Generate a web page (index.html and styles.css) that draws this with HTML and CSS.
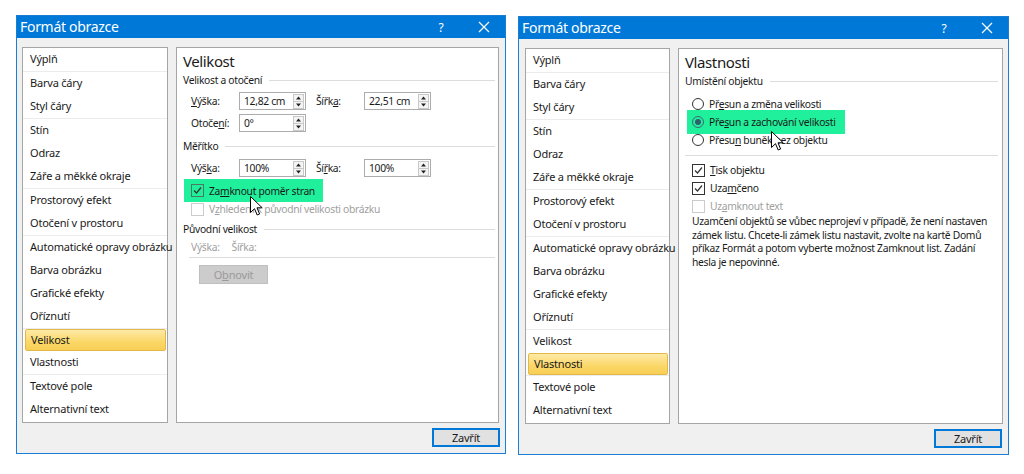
FILE: index.html
```html
<!DOCTYPE html>
<html lang="cs">
<head>
<meta charset="utf-8">
<title>Formát obrazce</title>
<link rel="stylesheet" href="styles.css">
</head>
<body>
<div class="screen">

  <!-- LEFT DIALOG -->
  <div class="dialog dialog-left">
    <div class="titlebar">
      <span class="title">Formát obrazce</span>
      <span class="tb-help">?</span>
      <svg class="tb-close" width="12" height="12" viewBox="0 0 12 12"><path d="M1 1L11 11M11 1L1 11" stroke="#fff" stroke-width="1.2"/></svg>
    </div>
    <div class="dbody">
      <div class="main">
        <ul class="nav">
          <li class="grp"><span class="item">Výplň</span></li>
          <li class="grp"><span class="item">Barva čáry</span><span class="item">Styl čáry</span></li>
          <li class="grp"><span class="item">Stín</span><span class="item">Odraz</span><span class="item">Záře a měkké okraje</span></li>
          <li class="grp"><span class="item">Prostorový efekt</span><span class="item">Otočení v prostoru</span></li>
          <li class="grp"><span class="item">Automatické opravy obrázku</span><span class="item">Barva obrázku</span><span class="item">Grafické efekty</span><span class="item">Oříznutí</span></li>
          <li class="grp"><span class="item sel">Velikost</span><span class="item">Vlastnosti</span></li>
          <li class="grp"><span class="item">Textové pole</span><span class="item">Alternativní text</span></li>
        </ul>
        <div class="panel">
          <h2 class="ph">Velikost</h2>
          <div class="sec">Velikost a otočení</div>
          <div class="frow r1">
            <span class="lbl"><u>V</u>ýška:</span>
            <span class="spin"><span class="val">12,82 cm</span><svg class="sb" width="11" height="15" viewBox="0 0 11 15"><rect x="0.5" y="0.5" width="10" height="14" fill="#f4f4f4" stroke="#c8c8c8"/><line x1="1" y1="7.5" x2="10" y2="7.5" stroke="#c8c8c8"/><path d="M3 5.5h5L5.5 2.5z" fill="#222"/><path d="M3 9.5h5L5.5 12.5z" fill="#222"/></svg></span>
            <span class="lbl lbl2">Šířk<u>a</u>:</span>
            <span class="spin"><span class="val">22,51 cm</span><svg class="sb" width="11" height="15" viewBox="0 0 11 15"><rect x="0.5" y="0.5" width="10" height="14" fill="#f4f4f4" stroke="#c8c8c8"/><line x1="1" y1="7.5" x2="10" y2="7.5" stroke="#c8c8c8"/><path d="M3 5.5h5L5.5 2.5z" fill="#222"/><path d="M3 9.5h5L5.5 12.5z" fill="#222"/></svg></span>
          </div>
          <div class="frow r2">
            <span class="lbl">Otoče<u>n</u>í:</span>
            <span class="spin"><span class="val">0°</span><svg class="sb" width="11" height="15" viewBox="0 0 11 15"><rect x="0.5" y="0.5" width="10" height="14" fill="#f4f4f4" stroke="#c8c8c8"/><line x1="1" y1="7.5" x2="10" y2="7.5" stroke="#c8c8c8"/><path d="M3 5.5h5L5.5 2.5z" fill="#222"/><path d="M3 9.5h5L5.5 12.5z" fill="#222"/></svg></span>
          </div>
          <div class="sec sec-m">Měřítko</div>
          <div class="frow r3">
            <span class="lbl">Výš<u>k</u>a:</span>
            <span class="spin"><span class="val">100%</span><svg class="sb" width="11" height="15" viewBox="0 0 11 15"><rect x="0.5" y="0.5" width="10" height="14" fill="#f4f4f4" stroke="#c8c8c8"/><line x1="1" y1="7.5" x2="10" y2="7.5" stroke="#c8c8c8"/><path d="M3 5.5h5L5.5 2.5z" fill="#222"/><path d="M3 9.5h5L5.5 12.5z" fill="#222"/></svg></span>
            <span class="lbl lbl2">Ší<u>ř</u>ka:</span>
            <span class="spin"><span class="val">100%</span><svg class="sb" width="11" height="15" viewBox="0 0 11 15"><rect x="0.5" y="0.5" width="10" height="14" fill="#f4f4f4" stroke="#c8c8c8"/><line x1="1" y1="7.5" x2="10" y2="7.5" stroke="#c8c8c8"/><path d="M3 5.5h5L5.5 2.5z" fill="#222"/><path d="M3 9.5h5L5.5 12.5z" fill="#222"/></svg></span>
          </div>
          <div class="chk hl hl-left">
            <span class="box checked"><svg width="11" height="11" viewBox="0 0 11 11"><path d="M2 5.5L4.5 8L9 2.5" fill="none" stroke="#333" stroke-width="1.2"/></svg></span>
            <span>Za<u>m</u>knout poměr stran</span>
          </div>
          <div class="chk dis chk-orig">
            <span class="box"></span>
            <span>V<u>z</u>hledem k původní velikosti obrázku</span>
          </div>
          <div class="sec sec-p">Původní velikost</div>
          <div class="orig dis"><span>Výška:</span><span>Šířka:</span></div>
          <div class="hline"></div>
          <div class="btn-dis">O<u>b</u>novit</div>
          <svg class="cursor cur-left" width="13" height="20" viewBox="0 0 13 20"><path d="M0.5 0.5V16.5L4.5 12.7L7.2 19L9.6 18L7 11.8H12.2Z" fill="#fff" stroke="#000" stroke-width="1"/></svg>
        </div>
      </div>
      <div class="foot"><span class="btn">Zavřít</span></div>
    </div>
  </div>

  <!-- RIGHT DIALOG -->
  <div class="dialog dialog-right">
    <div class="titlebar">
      <span class="title">Formát obrazce</span>
      <span class="tb-help">?</span>
      <svg class="tb-close" width="12" height="12" viewBox="0 0 12 12"><path d="M1 1L11 11M11 1L1 11" stroke="#fff" stroke-width="1.2"/></svg>
    </div>
    <div class="dbody">
      <div class="main">
        <ul class="nav">
          <li class="grp"><span class="item">Výplň</span></li>
          <li class="grp"><span class="item">Barva čáry</span><span class="item">Styl čáry</span></li>
          <li class="grp"><span class="item">Stín</span><span class="item">Odraz</span><span class="item">Záře a měkké okraje</span></li>
          <li class="grp"><span class="item">Prostorový efekt</span><span class="item">Otočení v prostoru</span></li>
          <li class="grp"><span class="item">Automatické opravy obrázku</span><span class="item">Barva obrázku</span><span class="item">Grafické efekty</span><span class="item">Oříznutí</span></li>
          <li class="grp"><span class="item">Velikost</span><span class="item sel">Vlastnosti</span></li>
          <li class="grp"><span class="item">Textové pole</span><span class="item">Alternativní text</span></li>
        </ul>
        <div class="panel">
          <h2 class="ph">Vlastnosti</h2>
          <div class="sec">Umístění objektu</div>
          <div class="radios">
            <div class="rad"><span class="rb"></span><span>Př<u>e</u>sun a změna velikosti</span></div>
            <div class="rad hl hl-right"><span class="rb on"></span><span>Pře<u>s</u>un a zachování velikosti</span></div>
            <div class="rad"><span class="rb"></span><span>Přesu<u>n</u> buněk bez objektu</span></div>
          </div>
          <div class="hline hline-full"></div>
          <div class="checks">
            <div class="chk"><span class="box checked"><svg width="11" height="11" viewBox="0 0 11 11"><path d="M2 5.5L4.5 8L9 2.5" fill="none" stroke="#333" stroke-width="1.2"/></svg></span><span><u>T</u>isk objektu</span></div>
            <div class="chk"><span class="box checked"><svg width="11" height="11" viewBox="0 0 11 11"><path d="M2 5.5L4.5 8L9 2.5" fill="none" stroke="#333" stroke-width="1.2"/></svg></span><span>Uza<u>m</u>čeno</span></div>
            <div class="chk dis"><span class="box"></span><span>Uz<u>a</u>mknout text</span></div>
          </div>
          <p class="note">Uzamčení objektů se vůbec neprojeví v případě, že není nastaven<br>zámek listu. Chcete-li zámek listu nastavit, zvolte na kartě Domů<br>příkaz Formát a potom vyberte možnost Zamknout list. Zadání<br>hesla je nepovinné.</p>
          <svg class="cursor cur-right" width="13" height="20" viewBox="0 0 13 20"><path d="M0.5 0.5V16.5L4.5 12.7L7.2 19L9.6 18L7 11.8H12.2Z" fill="#fff" stroke="#000" stroke-width="1"/></svg>
        </div>
      </div>
      <div class="foot"><span class="btn">Zavřít</span></div>
    </div>
  </div>

</div>
</body>
</html>
```

FILE: styles.css
```css
* { box-sizing: border-box; }

html, body {
  margin: 0;
  padding: 0;
  background: #fff;
}

body {
  font-family: "Noto Sans", "Open Sans", "DejaVu Sans", sans-serif;
  font-size: 11px;
  letter-spacing: -0.2px;
  color: #1a1a1a;
  width: 1024px;
  height: 474px;
  overflow: hidden;
}

u { text-decoration: underline; text-underline-offset: 1px; }

.screen {
  display: flex;
  align-items: flex-start;
  gap: 12px;
  padding: 15px 0 0 16px;
}

.dialog {
  border: 1px solid #1a7fd4;
  background: #f0f0f0;
  display: flex;
  flex-direction: column;
}

.dialog-left { width: 490px; height: 439px; }
.dialog-right { width: 491px; height: 439px; margin-top: 1px; }

.titlebar {
  height: 22px;
  background: #0078d7;
  color: #fff;
  display: flex;
  align-items: center;
  padding-left: 3px;
  flex-shrink: 0;
}

.title {
  font-size: 14px;
  letter-spacing: -0.3px;
  flex: 1;
  line-height: 22px;
}

.tb-help {
  font-size: 12px;
  width: 12px;
  text-align: center;
  margin-right: 31px;
}

.tb-close { margin-right: 15px; }

.dbody {
  flex: 1;
  display: flex;
  flex-direction: column;
  padding: 9px 6px 0 5px;
}

.dialog-right .dbody { padding: 9px 5px 0 6px; }

.main {
  display: flex;
  gap: 8px;
  height: 376px;
}

.nav {
  list-style: none;
  margin: 0;
  padding: 0;
  width: 146px;
  flex-shrink: 0;
  background: #fff;
  border: 1px solid #a5a5a5;
}

.dialog-right .nav { width: 145px; }

.grp + .grp { border-top: 1px solid #ececec; }

.item {
  display: block;
  height: 23px;
  line-height: 21px;
  padding: 0 0 2px 7px;
  white-space: nowrap;
}

.item.sel {
  margin: 0 1px 0 2px;
  padding-left: 5px;
  border: 1px solid #e3b84a;
  border-radius: 2px;
  background: linear-gradient(#fdeaa6, #fbd768 60%, #f8cf55);
  line-height: 19px;
  height: 22px;
}

.panel {
  flex: 1;
  background: #fff;
  border: 1px solid #a5a5a5;
  padding: 2px 3px 0 6px;
  position: relative;
  font-size: 10.3px;
  letter-spacing: -0.3px;
}

.dialog-right .panel { padding-right: 4px; }

.ph {
  margin: 0;
  font-size: 15px;
  letter-spacing: -0.4px;
  font-weight: normal;
  line-height: 22px;
  height: 22px;
  color: #1a1a1a;
}

.sec {
  display: flex;
  align-items: center;
  gap: 7px;
  height: 16px;
  white-space: nowrap;
}

.sec::after {
  content: "";
  flex: 1;
  border-top: 1px solid #dcdcdc;
}

.frow {
  display: flex;
  align-items: center;
  height: 18px;
  padding-left: 8px;
}

.r1 { margin-top: 4px; }
.r2 { margin-top: 4px; }
.sec-m { margin-top: 6px; }
.r3 { margin-top: 5px; }

.lbl { width: 48px; flex-shrink: 0; white-space: nowrap; }
.lbl2 { margin-left: 10px; }

.spin {
  width: 67px;
  height: 18px;
  border: 1px solid #acacac;
  display: flex;
  align-items: center;
  justify-content: space-between;
  padding: 0 1px 0 4px;
  background: #fff;
}

.val { white-space: nowrap; }
.sb { display: block; }

.chk {
  display: flex;
  align-items: center;
  gap: 5px;
  height: 17px;
  padding-left: 8px;
  white-space: nowrap;
}

.box {
  width: 13px;
  height: 13px;
  border: 1px solid #333;
  background: #fff;
  display: flex;
  align-items: center;
  justify-content: center;
  flex-shrink: 0;
}

.dis { color: #a0a0a0; }
.dis .box { border-color: #cccccc; }

.hl {
  background: #20f09b;
}

.hl .box { background: transparent; border-color: #4a7a62; }

.hl-left {
  margin: 2px 0 -3px 1px;
  padding: 3px 13px 3px 7px;
  height: 23px;
  width: 139px;
}

.chk-orig { margin-top: 2px; height: 16px; }

.sec-p { margin-top: 4px; }

.orig {
  display: flex;
  gap: 12px;
  padding-left: 8px;
  height: 16px;
  align-items: center;
  margin-top: 2px;
}

.hline {
  border-top: 1px solid #dcdcdc;
  margin: 2px 0 0 6px;
}

.btn-dis {
  margin: 7px 0 0 16px;
  width: 69px;
  height: 19px;
  background: #cccccc;
  color: #9a9a9a;
  text-align: center;
  line-height: 18px;
  border: 1px solid #bfbfbf;
  font-size: 11px;
  letter-spacing: -0.2px;
}

.foot {
  display: flex;
  justify-content: flex-end;
  padding-top: 5px;
}

.btn {
  width: 68px;
  height: 19px;
  border: 2px solid #0078d7;
  background: #e1e1e1;
  text-align: center;
  line-height: 15px;
  color: #1a1a1a;
}

.dialog-left .btn { margin-right: -1px; }
.dialog-right .btn { margin-right: 1px; }

.radios { margin-top: 6px; }

.rad {
  display: flex;
  align-items: center;
  gap: 5px;
  height: 18px;
  padding-left: 7px;
  white-space: nowrap;
}

.rb {
  width: 12px;
  height: 12px;
  border: 1px solid #333;
  border-radius: 50%;
  background: #fff;
  flex-shrink: 0;
  display: flex;
  align-items: center;
  justify-content: center;
}

.rb.on { border-color: #3a6a7a; background: transparent; }
.rb.on::after {
  content: "";
  width: 6px;
  height: 6px;
  border-radius: 50%;
  background: #2f5f6a;
}

.hl-right {
  margin: -3px 0 -3px 2px;
  padding: 3px 8px 3px 5px;
  height: 24px;
  width: 158px;
}

.hline-full { margin: 6px 0 0 0; }

.checks { margin-top: 5px; }
.checks .chk { height: 18px; padding-left: 7px; }

.note {
  margin: 0;
  padding-left: 7px;
  line-height: 13.5px;
  white-space: nowrap;
}

.cursor { position: absolute; }
.cur-left { left: 73px; top: 148px; }
.cur-right { left: 92px; top: 82px; }
```
